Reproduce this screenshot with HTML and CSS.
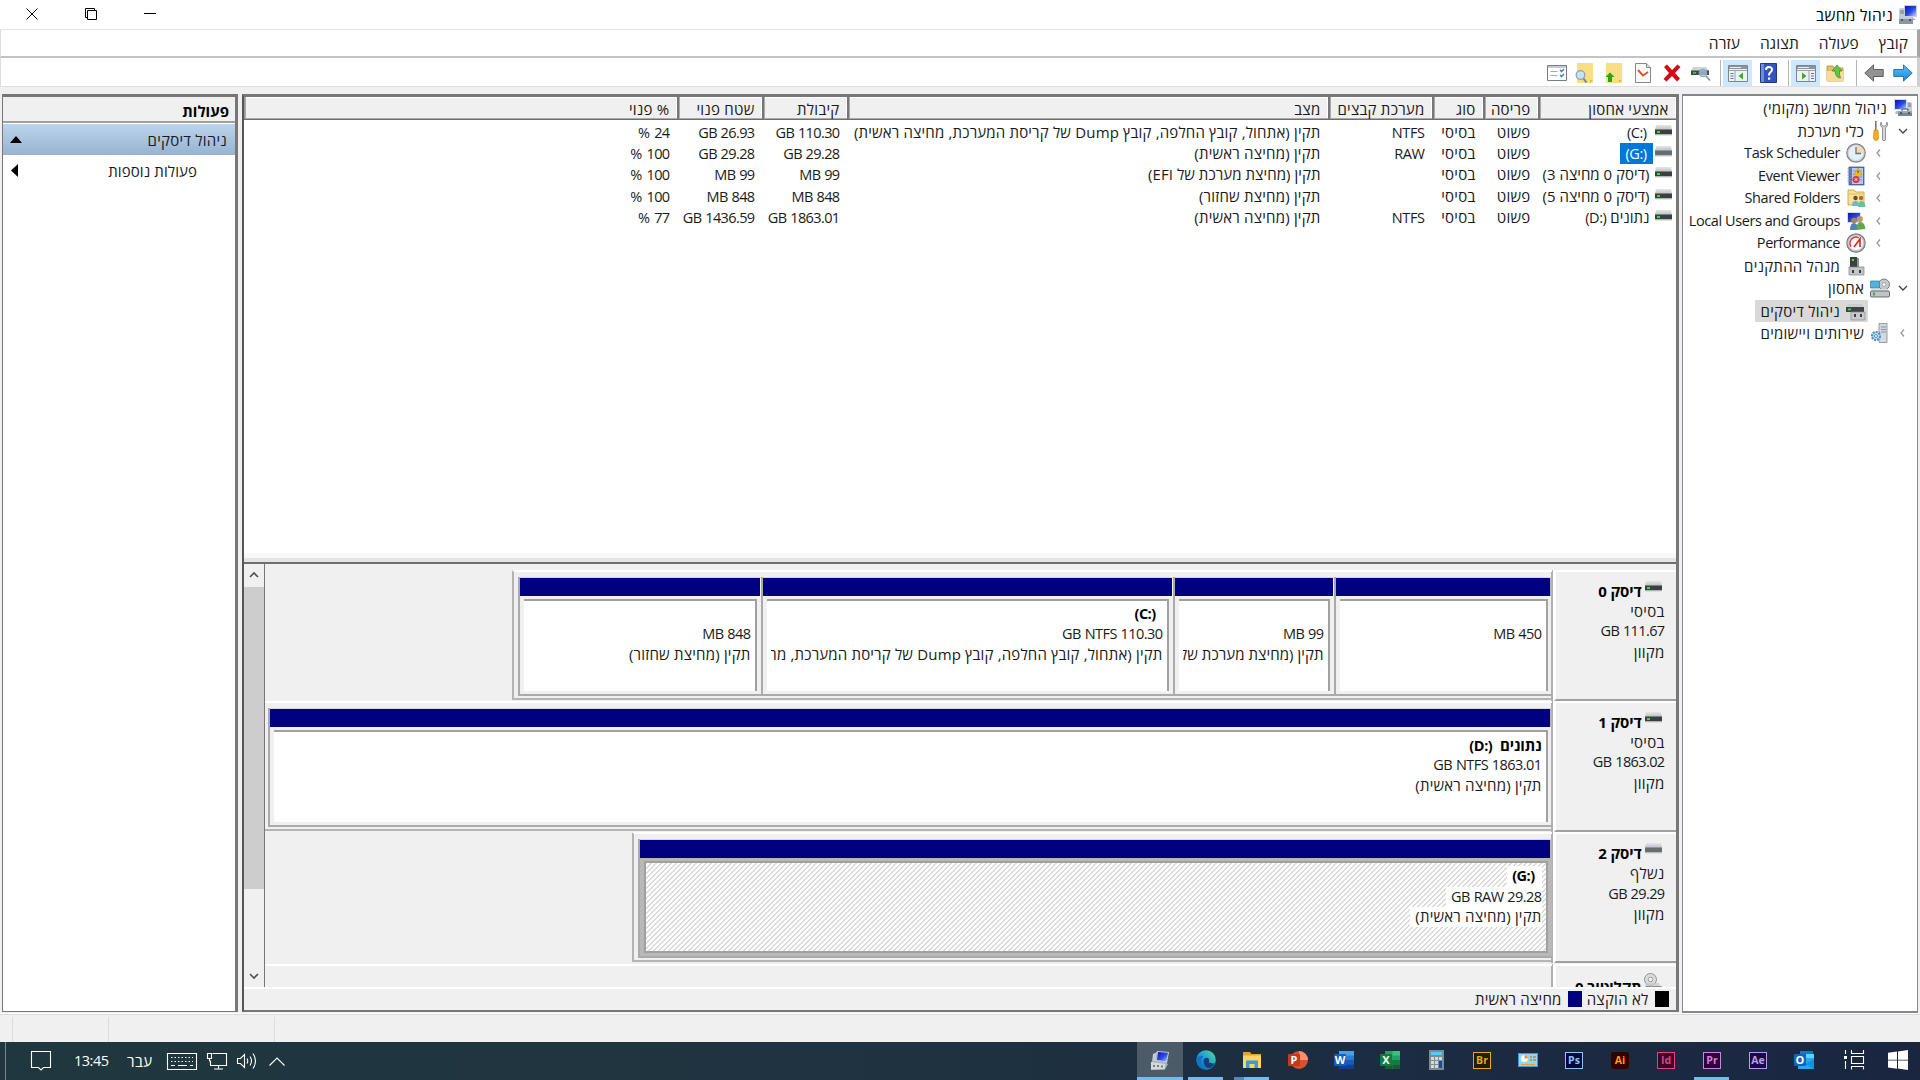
FILE: index.html
```html
<!DOCTYPE html>
<html lang="he" dir="rtl">
<head>
<meta charset="utf-8">
<title>ניהול מחשב</title>
<link rel="stylesheet" href="styles.css">
</head>
<body>
<svg class="defs" aria-hidden="true">
  <defs>
    <linearGradient id="gSilver" x1="0" y1="0" x2="0" y2="1"><stop offset="0" stop-color="#e4e7ea"/><stop offset="1" stop-color="#b9bec3"/></linearGradient>
    <linearGradient id="gScreen" x1="0" y1="0" x2="1" y2="1"><stop offset="0" stop-color="#0a12b8"/><stop offset=".55" stop-color="#2d4be0"/><stop offset="1" stop-color="#b8d4ff"/></linearGradient>
    <linearGradient id="gBlue" x1="0" y1="0" x2="0" y2="1"><stop offset="0" stop-color="#5cc0f8"/><stop offset="1" stop-color="#1b86d8"/></linearGradient>
    <linearGradient id="gEdge" x1="0" y1="1" x2="1" y2="0"><stop offset="0" stop-color="#0c59a4"/><stop offset=".5" stop-color="#1b9de2"/><stop offset="1" stop-color="#5fe07a"/></linearGradient>
    <symbol id="disk" viewBox="0 0 17 11"><path d="M1 0h15l1 5H0z" fill="url(#gSilver)"/><rect y="4.500" width="17" height="5" fill="#3c3f42"/><rect x="2" y="6" width="3" height="2" fill="#2fe03a"/><rect y="9.500" width="17" height="1" fill="#c9ccd0"/></symbol>
    <symbol id="disk-off" viewBox="0 0 17 11"><path d="M1 0h15l1 5H0z" fill="url(#gSilver)"/><rect y="4.500" width="17" height="5" fill="#6a6d70"/><rect y="9.500" width="17" height="1" fill="#c9ccd0"/></symbol>
    <symbol id="computer" viewBox="0 0 20 20"><path d="M1 1h13v11H1z" fill="#d8dde4"/><path d="M2 2h11v9H2z" fill="url(#gScreen)"/><path d="M14 4h3l2 1v8h-5z" fill="#c3cad0"/><path d="M15 6h3M15 8h3" stroke="#6f7a85"/><path d="M3 13h5l1 3H2z" fill="#b3bac0"/><path d="M5 13h14v5H5z" fill="#76858f"/><path d="M5 13h14v2H5z" fill="#9aa8b1"/><path d="M8 14v2M16 14v2" stroke="#39444c" stroke-width="1.5"/><path d="M9 13v-2h6v2" fill="none" stroke="#4a565f"/></symbol>
    <symbol id="computer-flip" viewBox="0 0 20 20"><path d="M6 0h13v12H6z" fill="#c9cfee"/><path d="M7 1h11v10H7z" fill="url(#gScreen)"/><path d="M2 3h5v9H1V5z" fill="#c3cad0"/><path d="M2 6h4M2 8h4" stroke="#6f7a85"/><path d="M1 12h14v7H1z" fill="#8b979f"/><path d="M1 12h14v2H1z" fill="#c4cbd0"/><path d="M4 14v2M12 14v2" stroke="#39444c" stroke-width="1.5"/><path d="M14 12l4 3h-3z" fill="#aab"/></symbol>
    <symbol id="console" viewBox="0 0 20 20"><path d="M7 1l12 1-2 11-11-2z" fill="#c9cfee"/><path d="M8 2l10 .8-1.700 8.700L7 10z" fill="url(#gScreen)"/><path d="M3 4l4-2-1 9-4 1z" fill="#c3cad0"/><path d="M1 12l9-2 8 4-3 5-14 1z" fill="#aeb6bc"/><path d="M1 12l14 2v5.500L1 19.500z" fill="#d3d8dc"/><path d="M4 15v2M8 15v2M12 15.500v2" stroke="#56616a" stroke-width="1.500"/></symbol>
    <symbol id="tools" viewBox="0 0 20 20"><path d="M5 0h1.6v10H5z" fill="#777"/><path d="M4 9h4l.6 8q-.4 2.6-2.6 2.6T3.400 17z" fill="#f2ad1f" stroke="#c98508" stroke-width=".6"/><path d="M11 1q-2 4 1.500 6v12q1.500 1.500 3 0V7q3.500-2 1.500-6l-1 3.500-2 .8-2-.8z" fill="#d5d8da" stroke="#7c8286" stroke-width=".8"/></symbol>
    <symbol id="clock" viewBox="0 0 20 20"><circle cx="10" cy="10" r="9.200" fill="#d3d6d9" stroke="#808487" stroke-width="1.200"/><circle cx="10" cy="10" r="7.200" fill="#e4f0fa"/><path d="M10 10V2.800A7.200 7.200 0 0 1 17.200 10z" fill="#fbd9a4"/><path d="M10 4v6.500h5" fill="none" stroke="#57769a" stroke-width="1.300"/></symbol>
    <symbol id="events" viewBox="0 0 20 20"><rect x="3" y="1" width="15" height="18" fill="#5673b4" stroke="#3a5289" stroke-width=".7"/><rect x="6" y="2" width="11" height="16" fill="#b9c9ea"/><path d="M7 5h9M7 8h9M7 11h9M7 14h9" stroke="#7d97cf"/><path d="M1.500 3h4M1.500 6h4M1.500 9h4M1.500 12h4M1.500 15h4" stroke="#8594ad" stroke-width="1.200"/><path d="M12 2l4 7H8z" fill="#f6c719" stroke="#b98d00" stroke-width=".5"/><path d="M12 4.500v2.700" stroke="#333"/><circle cx="10" cy="13.500" r="3.500" fill="#dc3737"/><path d="M8.700 12.200l2.600 2.600m0-2.600l-2.600 2.600" stroke="#fff"/></symbol>
    <symbol id="shared" viewBox="0 0 20 20"><path d="M2 2h6l2 2h8v13H2z" fill="#f9e09a" stroke="#c69c2d" stroke-width=".8"/><path d="M3 6h14" stroke="#e2bd58"/><circle cx="9.500" cy="10" r="2.200" fill="#6b4b2e"/><path d="M6 18q0-5 3.500-5t3.500 5z" fill="#6fb4dc"/><circle cx="15" cy="10" r="2.200" fill="#a2713e"/><path d="M12 19q0-6 3.500-6t4 6z" fill="#5fc793"/></symbol>
    <symbol id="users" viewBox="0 0 20 20"><path d="M1 1h14v11H1z" fill="#d8dde4"/><path d="M2 2h12v9H2z" fill="url(#gScreen)"/><circle cx="8" cy="9.500" r="2.800" fill="#a88262"/><path d="M4 19q0-7 4-7t4 7z" fill="#5483b7"/><circle cx="14" cy="8" r="2.900" fill="#c59a62"/><path d="M10.500 19q0-8 4-8t5 7z" fill="#63a750"/></symbol>
    <symbol id="gauge" viewBox="0 0 20 20"><circle cx="10" cy="10" r="9.200" fill="#c5c8cb" stroke="#7a7e81" stroke-width="1.200"/><circle cx="10" cy="10" r="7" fill="#fff"/><path d="M5 13.500A6 6 0 0 1 13 5" fill="none" stroke="#d33" stroke-width="1.400"/><path d="M8 14l6-8v8" fill="none" stroke="#e02020" stroke-width="1.600"/></symbol>
    <symbol id="device" viewBox="0 0 20 20"><path d="M4 1h7v12H4z" fill="#3d4144"/><path d="M11 2h2v9h-2z" fill="#8d9296"/><rect x="6" y="3" width="2" height="2" fill="#3bdb45"/><path d="M3 11h15v8H3z" fill="#c3c7ca" stroke="#7e8386" stroke-width=".7"/><path d="M6 14h2v3H6zM13 14h2v3h-2z" fill="#3a3d40"/></symbol>
    <symbol id="storage" viewBox="0 0 20 20"><circle cx="14" cy="6.500" r="5.500" fill="#c4c8cb" stroke="#7a8084"/><circle cx="14" cy="6.500" r="1.800" fill="#fff" stroke="#888" stroke-width=".6"/><path d="M.5 3h9v7h-9z" fill="#52b4dc" stroke="#277fa8" stroke-width=".7"/><path d="M2 11h16l1.500 3H.5z" fill="#dde0e3"/><rect x=".5" y="13" width="19" height="6" rx="1" fill="#c0c4c8" stroke="#5d6266" stroke-width=".9"/><path d="M3 16h2" stroke="#32b53c" stroke-width="3"/></symbol>
    <symbol id="diskmgmt" viewBox="0 0 20 20"><path d="M2 3h14l2 4H0z" fill="#c9cdd1"/><rect y="6" width="18" height="5" fill="#3f4346"/><rect x="2" y="7.500" width="3" height="1.800" fill="#38db42"/><path d="M5 11h14v8H5z" fill="#c6cacd" stroke="#888d91" stroke-width=".7"/><path d="M8 13h2v3H8zM14 13h2v3h-2z" fill="#3d4043"/></symbol>
    <symbol id="services" viewBox="0 0 20 20"><path d="M9 .500h8v19H9z" fill="#d3d9de" stroke="#7f8a94" stroke-width=".8"/><path d="M11 4h5M11 6.500h5M11 9h5" stroke="#8995a0"/><circle cx="6" cy="13" r="4" fill="#c7e0f3" stroke="#4e8fbf" stroke-width="2.200" stroke-dasharray="2 1"/><circle cx="6" cy="13" r="1.500" fill="#fff" stroke="#4e8fbf"/></symbol>
    <symbol id="disc" viewBox="0 0 18 18"><circle cx="6.500" cy="6.500" r="6" fill="#d9dcdf" stroke="#8f9498"/><circle cx="6.500" cy="6.500" r="2.300" fill="#f3f4f5" stroke="#9a9fa3"/><path d="M2 10h13l2 4H1z" fill="#c5c9cc" opacity=".8"/><rect x="2" y="13.500" width="16" height="4.500" fill="#4a4e51"/><rect x="4" y="14.500" width="3" height="2" fill="#2fe03a"/></symbol>
    <symbol id="fwd" viewBox="0 0 20 18"><path d="M.8 5.500h9.700V.9L19.200 9l-8.700 8.100v-4.600H.8z" fill="url(#gBlue)" stroke="#2877b4" stroke-width="1"/></symbol>
    <symbol id="back" viewBox="0 0 20 18"><path d="M19.200 5.500H9.500V.9L.8 9l8.700 8.100v-4.600h9.700z" fill="#929292" stroke="#5f5f5f" stroke-width="1"/></symbol>
    <symbol id="folder-up" viewBox="0 0 18 18"><path d="M1 2h6l1.500 2H17v13H1z" fill="#e5bd62" stroke="#b78e38" stroke-width=".8"/><path d="M1 7h16v10H1z" fill="#f6dc98"/><path d="M14.500 14q-5 0-5.500-7H6l5-6 5 6h-2.500q-.5 4 1 7z" fill="#5fc542" stroke="#2c8f1d" stroke-width=".7"/></symbol>
    <symbol id="pane-r" viewBox="0 0 20 17"><path d="M.5.500h19v16H.5z" fill="#eef0f2" stroke="#7c868f"/><path d="M1 1h18v3H1z" fill="#8a949e"/><path d="M2 2.500h11" stroke="#e9edf0"/><path d="M1 5.500h18M13 6v10" stroke="#98a2aa"/><path d="M15 8.500h3M15 11h3M15 13.500h3" stroke="#56779e" stroke-width="1.200"/><path d="M6 7.500v7l4.500-3.500z" fill="#3cab2a"/></symbol>
    <symbol id="pane-l" viewBox="0 0 20 17"><path d="M.5.500h19v16H.5z" fill="#eef0f2" stroke="#7c868f"/><path d="M1 1h18v3H1z" fill="#8a949e"/><path d="M2 2.500h11" stroke="#e9edf0"/><path d="M1 5.500h18M7 6v10" stroke="#98a2aa"/><path d="M2.500 8.500h3M2.500 11h3M2.500 13.500h3" stroke="#56779e" stroke-width="1.200"/><path d="M15 7.500v7L10.500 11z" fill="#3cab2a"/></symbol>
    <symbol id="help" viewBox="0 0 17 20"><path d="M.5.500h16v19H.5z" fill="#3155bd" stroke="#203987"/><path d="M1 1h3v18H1z" fill="#6f8cdc"/><path d="M6 7q0-3 3-3t3 2.700q0 1.500-1.500 2.500T9 12.500" fill="none" stroke="#fff" stroke-width="2"/><rect x="8" y="14.500" width="2.200" height="2.200" fill="#fff"/></symbol>
    <symbol id="disk-find" viewBox="0 0 20 18"><path d="M2 3h13l3 4H0z" fill="#cfd3d7"/><rect y="6.500" width="18" height="4.500" fill="#45494c"/><rect x="2" y="8" width="3" height="1.600" fill="#36d441"/><circle cx="12" cy="9" r="3.800" fill="#9cc6e4" fill-opacity=".8" stroke="#8fa3b3" stroke-width="1.100"/><path d="M15 12l4 4.500" stroke="#8296a6" stroke-width="1.800"/></symbol>
    <symbol id="del" viewBox="0 0 18 18"><path d="M1 3l3-2.500L9 6l5.500-5.500L17.500 3 12 9l5 5.500-3 3L9 12l-5.500 5.500-3-2.500L6 9z" fill="#d40a14"/></symbol>
    <symbol id="doc" viewBox="0 0 16 20"><path d="M.5.500h11l4 4v15H.5z" fill="#fafafa" stroke="#888"/><path d="M11.500.500v4h4" fill="#ddd" stroke="#888"/><path d="M3 7l5 5.500L13 9" fill="none" stroke="#e4502b" stroke-width="1.900"/></symbol>
    <symbol id="note-up" viewBox="0 0 17 20"><path d="M1 0h16v20H1z" fill="#f8df84"/><path d="M14 20V17h3" fill="#e0bb4c"/><path d="M5 9.500L.5 14H3v5h4v-5h2.500z" fill="#29a41d"/></symbol>
    <symbol id="note-find" viewBox="0 0 18 20"><path d="M2 0h16v20H2z" fill="#f8df84"/><path d="M15 20V17h3" fill="#e0bb4c"/><circle cx="5.500" cy="12" r="4.300" fill="#c6e2f4" stroke="#8aa4b6" stroke-width="1.300"/><path d="M8.500 15.500l3 4" stroke="#71889a" stroke-width="2"/></symbol>
    <symbol id="list" viewBox="0 0 20 16"><path d="M.5.500h19v15H.5z" fill="#fff" stroke="#747e86"/><path d="M1 1h18v2H1z" fill="#c5ccd1"/><path d="M3.500 6.500h7M3.500 10.500h7" stroke="#a2aab1"/><path d="M13 5l1.500 1.500L17 4M13 10l1.500 1.500L17 9" fill="none" stroke="#2e7fc4" stroke-width="1.400"/></symbol>
    <symbol id="edge" viewBox="0 0 20 20"><circle cx="10" cy="10" r="9.800" fill="url(#gEdge)"/><path d="M.3 9Q3 5 7.500 6 4.500 9 5.500 13q1.500 4.500 6.500 6.500Q1.500 20.500.3 9z" fill="#1373c4"/><path d="M7.500 11q.5-3.500 3.500-3.200 2.500.5 2 3.200-.8 1.500-.8 2.300 3 1.800 6.800-.3-1 3.500-4.500 5Q8 19 7.500 11z" fill="#123f78"/><path d="M9 9.500q2.500-1.500 3.800 1-.8 1.800-.8 2.800 3.500 1.500 7-.8-1.500 1-4.500.6-2.500-.5-1.800-2.200Q12.500 7.500 9 9.500z" fill="#1b2a41"/></symbol>
    <symbol id="explorer" viewBox="0 0 20 18"><path d="M1 1h7l1.500 2H19v14H1z" fill="#e0a526"/><path d="M1 4.500h18V17H1z" fill="#fcd565"/><path d="M4 17V9.500h12V17h-3.500v-4h-5v4z" fill="#3f98dc"/></symbol>
    <symbol id="ppt" viewBox="0 0 20 20"><circle cx="11" cy="10" r="9" fill="#d35230"/><path d="M11 1a9 9 0 0 1 9 9h-9z" fill="#ff8f6b"/><rect y="4" width="12" height="12" rx="1" fill="#c13b1b"/></symbol>
    <symbol id="word" viewBox="0 0 20 18"><path d="M5 0h15v18H5z" fill="#2b7cd3"/><path d="M5 0h15v4.500H5z" fill="#41a5ee"/><path d="M5 9h15v4.500H5z" fill="#185abd"/><path d="M5 13.500h15V18H5z" fill="#103f91"/><rect y="3" width="12" height="12" rx="1" fill="#185abd"/></symbol>
    <symbol id="excel" viewBox="0 0 20 18"><path d="M5 0h15v18H5z" fill="#21a366"/><path d="M12.500 0H20v4.500h-7.500z" fill="#33c481"/><path d="M5 9h7.500v9H5z" fill="#185c37"/><path d="M12.500 9H20v4.500h-7.500z" fill="#107c41"/><path d="M12.500 13.500H20V18h-7.500z" fill="#185c37"/><rect y="3" width="12" height="12" rx="1" fill="#107c41"/></symbol>
    <symbol id="outlook" viewBox="0 0 20 18"><path d="M6 0h13v10H6z" fill="#0f78d4"/><path d="M12 3h8v6h-8z" fill="#50d9ff"/><path d="M4 7h16v11H4z" fill="#28a8ea"/><path d="M20 8v10l-9-5z" fill="#1490df"/><rect y="3" width="12" height="12" rx="1" fill="#0f66b8"/></symbol>
    <symbol id="calc" viewBox="0 0 15 20"><path d="M0 0h15v20H0z" fill="#7f8b94"/><path d="M2 2h11v3H2z" fill="#4ed0f5"/><path d="M2 7h3v3H2zM6 7h3v3H6zM10 7h3v3h-3zM2 11h3v3H2zM6 11h3v3H6zM2 15h3v3H2zM6 15h3v3H6z" fill="#d3d9dd"/><path d="M10 11h3v7h-3z" fill="#12509c"/></symbol>
    <symbol id="panel" viewBox="0 0 20 14"><path d="M0 0h20v14H0z" fill="#3d9cd2"/><path d="M1 1h18v12H1z" fill="#8ed6fa"/><circle cx="6.500" cy="5.500" r="3.500" fill="#fff"/><path d="M6.500 5.500V2A3.500 3.500 0 0 1 10 5.500z" fill="#f39a1e"/><path d="M12 4h2M15 4h3M12 7h2M15 7h3" stroke="#e07c14" stroke-width="1.300"/><path d="M3 11.500h14" stroke="#f39a1e"/></symbol>
    <symbol id="taskview" viewBox="0 0 21 20"><g fill="none" stroke="#fff" stroke-width="1.100"><path d="M1.500 0v4M1.500 11v8M7.500 0v3.500h12V0M7.500 6.500h12v7h-12zM7.500 19.500v-3h12v3"/></g><path d="M0 6h3v3H0z" fill="#fff"/></symbol>
    <symbol id="win" viewBox="0 0 20 20"><path d="M0 2.800L9 1.500v8.200H0zM10 1.400L20 0v9.700H10zM0 10.600h9v8.200l-9-1.300zM10 10.600h10V20l-10-1.400z" fill="#fff"/></symbol>
  </defs>
</svg>

<header class="titlebar">
  <div class="title"><svg class="ic20"><use href="#computer-flip"/></svg><span>ניהול מחשב</span></div>
  <div class="winbtns" dir="ltr">
    <svg width="12" height="12"><path d="M.5.500l11 11m0-11l-11 11" stroke="#000" fill="none"/></svg>
    <svg width="12" height="12"><path d="M2.500 2.500h9v9h-9zM2.500 9.500h-2v-9h9v2" stroke="#000" fill="none"/></svg>
    <svg width="12" height="12"><path d="M0 5.500h12" stroke="#000"/></svg>
  </div>
</header>

<nav class="menubar"><span>קובץ</span><span>פעולה</span><span>תצוגה</span><span>עזרה</span></nav>

<div class="toolbar">
  <svg class="t-arrow"><use href="#fwd"/></svg>
  <svg class="t-arrow t-back"><use href="#back"/></svg>
  <i class="sep"></i>
  <svg class="t-folder"><use href="#folder-up"/></svg>
  <span class="toggled"><svg><use href="#pane-r"/></svg></span>
  <i class="sep sep-near"></i>
  <svg class="t-help"><use href="#help"/></svg>
  <span class="toggled toggled-b"><svg><use href="#pane-l"/></svg></span>
  <i class="sep sep-near"></i>
  <svg class="t-find"><use href="#disk-find"/></svg>
  <svg class="t-del"><use href="#del"/></svg>
  <svg class="t-doc"><use href="#doc"/></svg>
  <svg class="t-up"><use href="#note-up"/></svg>
  <svg class="t-nfind"><use href="#note-find"/></svg>
  <svg class="t-list"><use href="#list"/></svg>
</div>

<main class="work">
  <aside class="tree">
    <div class="node root"><svg class="ic20"><use href="#computer"/></svg><span>ניהול מחשב (מקומי)</span></div>
    <div class="node l1"><svg class="chev"><path d="M1 3l4 4 4-4" stroke="#444"/></svg><svg class="ic20"><use href="#tools"/></svg><span>כלי מערכת</span></div>
    <div class="node l2"><svg class="chev"><path d="M6 1.500L3 5l3 3.500" stroke="#999"/></svg><svg class="ic20"><use href="#clock"/></svg><span class="en">Task Scheduler</span></div>
    <div class="node l2"><svg class="chev"><path d="M6 1.500L3 5l3 3.500" stroke="#999"/></svg><svg class="ic20"><use href="#events"/></svg><span class="en">Event Viewer</span></div>
    <div class="node l2"><svg class="chev"><path d="M6 1.500L3 5l3 3.500" stroke="#999"/></svg><svg class="ic20"><use href="#shared"/></svg><span class="en">Shared Folders</span></div>
    <div class="node l2"><svg class="chev"><path d="M6 1.500L3 5l3 3.500" stroke="#999"/></svg><svg class="ic20"><use href="#users"/></svg><span class="en">Local Users and Groups</span></div>
    <div class="node l2"><svg class="chev"><path d="M6 1.500L3 5l3 3.500" stroke="#999"/></svg><svg class="ic20"><use href="#gauge"/></svg><span class="en">Performance</span></div>
    <div class="node l2"><i class="chev"></i><svg class="ic20"><use href="#device"/></svg><span>מנהל ההתקנים</span></div>
    <div class="node l1"><svg class="chev"><path d="M1 3l4 4 4-4" stroke="#444"/></svg><svg class="ic20"><use href="#storage"/></svg><span>אחסון</span></div>
    <div class="node l2"><i class="chev"></i><div class="sel"><svg class="ic20"><use href="#diskmgmt"/></svg><span>ניהול דיסקים</span></div></div>
    <div class="node l1"><svg class="chev"><path d="M6 1.500L3 5l3 3.500" stroke="#999"/></svg><svg class="ic20"><use href="#services"/></svg><span>שירותים ויישומים</span></div>
  </aside>

  <section class="center">
    <div class="vol-head cols">
      <span>אמצעי אחסון</span><span>פריסה</span><span>סוג</span><span>מערכת קבצים</span><span>מצב</span><span>קיבולת</span><span>שטח פנוי</span><span>% פנוי</span>
    </div>
    <div class="vol-body">
      <div class="vol cols"><span class="name"><svg><use href="#disk"/></svg><b class="sp" dir="ltr">(C:)</b></span><span>פשוט</span><span>בסיסי</span><span class="en">NTFS</span><span class="long">תקין (אתחול, קובץ החלפה, קובץ Dump של קריסת המערכת, מחיצה ראשית)</span><span class="num" dir="ltr">GB 110.30</span><span class="num" dir="ltr">GB 26.93</span><span class="num pct" dir="ltr">% 24</span></div>
      <div class="vol cols"><span class="name"><svg><use href="#disk-off"/></svg><b class="sp hl" dir="ltr">(G:)</b></span><span>פשוט</span><span>בסיסי</span><span class="en">RAW</span><span class="st">תקין (מחיצה ראשית)</span><span class="num" dir="ltr">GB 29.28</span><span class="num" dir="ltr">GB 29.28</span><span class="num pct" dir="ltr">% 100</span></div>
      <div class="vol cols"><span class="name"><svg><use href="#disk"/></svg><b>(דיסק 0 מחיצה 3)</b></span><span>פשוט</span><span>בסיסי</span><span></span><span class="efi">תקין (מחיצת מערכת של EFI)</span><span class="num" dir="ltr">MB 99</span><span class="num" dir="ltr">MB 99</span><span class="num pct" dir="ltr">% 100</span></div>
      <div class="vol cols"><span class="name"><svg><use href="#disk"/></svg><b>(דיסק 0 מחיצה 5)</b></span><span>פשוט</span><span>בסיסי</span><span></span><span class="st">תקין (מחיצת שחזור)</span><span class="num" dir="ltr">MB 848</span><span class="num" dir="ltr">MB 848</span><span class="num pct" dir="ltr">% 100</span></div>
      <div class="vol cols"><span class="name"><svg><use href="#disk"/></svg><b>נתונים <bdi class="en" dir="ltr">(D:)</bdi></b></span><span>פשוט</span><span>בסיסי</span><span class="en">NTFS</span><span class="st">תקין (מחיצה ראשית)</span><span class="num" dir="ltr">GB 1863.01</span><span class="num" dir="ltr">GB 1436.59</span><span class="num pct" dir="ltr">% 77</span></div>
    </div>
    <div class="splitter"></div>
    <div class="graph">
      <div class="disks">
        <div class="disk">
          <div class="label"><h4><svg><use href="#disk"/></svg>דיסק 0</h4><p>בסיסי</p><p dir="ltr">GB 111.67</p><p>מקוון</p></div>
          <div class="parts d0">
            <div class="part p450"><div class="bar"></div><div class="pane"><p></p><p dir="ltr">MB 450</p></div></div>
            <div class="part p99"><div class="bar"></div><div class="pane"><p></p><p dir="ltr">MB 99</p><p class="efi">תקין (מחיצת מערכת של EFI)</p></div></div>
            <div class="part pc"><div class="bar"></div><div class="pane"><p class="nm in" dir="ltr">(C:)</p><p dir="ltr">GB NTFS 110.30</p><p class="long">תקין (אתחול, קובץ החלפה, קובץ Dump של קריסת המערכת, מחיצה ראשית)</p></div></div>
            <div class="part p848"><div class="bar"></div><div class="pane"><p></p><p dir="ltr">MB 848</p><p class="st">תקין (מחיצת שחזור)</p></div></div>
          </div>
        </div>
        <div class="disk">
          <div class="label"><h4><svg><use href="#disk"/></svg>דיסק 1</h4><p>בסיסי</p><p dir="ltr">GB 1863.02</p><p>מקוון</p></div>
          <div class="parts d1">
            <div class="part"><div class="bar"></div><div class="pane"><p class="nm">נתונים&nbsp; <bdi class="en" dir="ltr">(D:)</bdi></p><p dir="ltr">GB NTFS 1863.01</p><p class="st">תקין (מחיצה ראשית)</p></div></div>
          </div>
        </div>
        <div class="disk">
          <div class="label"><h4><svg><use href="#disk-off"/></svg>דיסק 2</h4><p>נשלף</p><p dir="ltr">GB 29.29</p><p>מקוון</p></div>
          <div class="parts d2">
            <div class="part picked"><div class="bar"></div><div class="pane"><p class="nm in" dir="ltr">(G:)</p><p dir="ltr">GB RAW 29.28</p><p class="st">תקין (מחיצה ראשית)</p></div></div>
          </div>
        </div>
        <div class="disk">
          <div class="label"><h4 class="cd"><svg><use href="#disc"/></svg>תקליטור 0</h4></div>
          <div class="parts d3"></div>
        </div>
      </div>
      <div class="scroll">
        <svg viewBox="0 0 10 10"><path d="M1 7l4-4 4 4"/></svg>
        <div class="thumb"></div>
        <svg viewBox="0 0 10 10"><path d="M1 3l4 4 4-4"/></svg>
      </div>
    </div>
    <div class="legend"><i class="sw black"></i><span>לא הוקצה</span><i class="sw navy"></i><span>מחיצה ראשית</span></div>
  </section>

  <aside class="actions">
    <h3>פעולות</h3>
    <div class="group"><span>ניהול דיסקים</span><svg width="12" height="7"><path d="M0 7l6-7 6 7z"/></svg></div>
    <div class="more"><span>פעולות נוספות</span><svg width="7" height="13"><path d="M7 0v13L0 6.500z"/></svg></div>
  </aside>
</main>

<div class="status"><i></i><i></i><i></i></div>

<footer class="taskbar">
  <div class="apps">
    <span class="app"><svg class="w20"><use href="#win"/></svg></span>
    <span class="app tv"><svg class="w21"><use href="#taskview"/></svg></span>
    <span class="app"><svg class="w18"><use href="#outlook"/></svg><b class="ol">O</b></span>
    <span class="app"><em class="adobe ae">Ae</em></span>
    <span class="app run"><em class="adobe pr">Pr</em></span>
    <span class="app"><em class="adobe idn">Id</em></span>
    <span class="app"><em class="adobe ai">Ai</em></span>
    <span class="app"><em class="adobe ps">Ps</em></span>
    <span class="app"><svg class="w14"><use href="#panel"/></svg></span>
    <span class="app"><em class="adobe br">Br</em></span>
    <span class="app"><svg class="wc"><use href="#calc"/></svg></span>
    <span class="app"><svg class="w18"><use href="#excel"/></svg><b>X</b></span>
    <span class="app"><svg class="w18"><use href="#word"/></svg><b>W</b></span>
    <span class="app"><svg class="w20"><use href="#ppt"/></svg><b>P</b></span>
    <span class="app run multi"><svg class="w18"><use href="#explorer"/></svg></span>
    <span class="app run"><svg class="w20"><use href="#edge"/></svg></span>
    <span class="app run on"><svg class="w20"><use href="#console"/></svg></span>
  </div>
  <div class="tray" dir="ltr">
    <i class="peek"></i>
    <svg class="tr-note" width="20" height="20"><path d="M.5.500h19v16h-7l-2.500 2.500L7.500 16.500h-7z"/></svg>
    <span class="time">13:45</span>
    <span class="lang">עבר</span>
    <svg class="tr-kb" width="30" height="17"><path d="M.5.500h29v16H.5z"/><path d="M4 4.500h22M4 8.500h22" stroke-dasharray="1.500 2"/><path d="M4 12.500h4M11 12.500h9M23 12.500h3"/></svg>
    <svg class="tr-net" width="20" height="17"><path d="M5.500.500h14v12h-16V7.500M11.500 12.500v3M7 16h9M.5.500h4v5h-4zM2.500 5.500v3"/></svg>
    <svg class="tr-vol" width="20" height="18"><path d="M.5 6.500h3l4-4v13l-4-4h-3zM10 6.500q1.500 2.500 0 5M13 4.500q3 4.500 0 9M16 1.500q5 7.500 0 15"/></svg>
    <svg class="tr-up" width="16" height="9"><path d="M.5 8.500L8 1l7.500 7.500"/></svg>
  </div>
</footer>
</body>
</html>
```

FILE: styles.css
```css
* { box-sizing: border-box; }
html, body { margin: 0; height: 100%; }
body {
  width: 1920px; height: 1080px; overflow: hidden;
  display: flex; flex-direction: column;
  background: #f0f0f0; color: #1a1a1a;
  font-family: "Open Sans", "Noto Sans", sans-serif; font-size: 15px; line-height: 20px; letter-spacing: .24px;
  white-space: nowrap;
}
h3, h4, p { margin: 0; font: inherit; }
b, em { font-weight: inherit; font-style: normal; }
svg { display: block; flex: none; overflow: visible; }
.defs { position: absolute; width: 0; height: 0; }
.ic20 { width: 20px; height: 20px; }
.en { font-size: 14.5px; letter-spacing: -.42px; }

.titlebar { height: 29px; flex: none; background: #fff; display: flex; justify-content: space-between; align-items: center; font-size: 15.5px; letter-spacing: .3px; }
.title { display: flex; align-items: center; gap: 5px; padding-right: 2px; color: #000; }
.winbtns { display: flex; gap: 47px; padding: 0 0 1px 26px; }

.menubar { height: 29px; flex: none; background: #fff; border-top: 1px solid #e3e3e3; border-bottom: 2px solid #c4c4c8; border-left: 1px solid #ddd; border-right: 3px solid #a5a5a5; display: flex; align-items: center; padding: 0 9px 0 0; gap: 20px; font-size: 15.5px; letter-spacing: .1px; }

.toolbar { height: 29px; flex: none; background: #fff; border-bottom: 1px solid #dedede; border-left: 1px solid #ddd; border-right: 3px solid #d0d0d0; display: flex; align-items: center; padding: 2px 4px 0 0; }
.t-arrow { width: 20px; height: 18px; }
.t-back { margin-right: 9px; }
.sep { width: 1px; height: 26px; background: #b4b4b4; margin-right: 7px; }
.sep-near { margin-right: 2px; }
.t-folder { width: 18px; height: 18px; margin-right: 12px; }
.toggled { width: 29px; height: 26px; background: #cce8ff; display: flex; align-items: center; justify-content: center; margin-right: 6px; }
.toggled svg { width: 20px; height: 17px; }
.toggled-b { margin-right: 8px; }
.t-help { width: 17px; height: 20px; margin-right: 11px; }
.t-find { width: 20px; height: 18px; margin-right: 9px; }
.t-del { width: 18px; height: 18px; margin-right: 10px; }
.t-doc { width: 16px; height: 20px; margin-right: 12px; }
.t-up { width: 17px; height: 20px; margin-right: 13px; }
.t-nfind { width: 18px; height: 20px; margin-right: 12px; }
.t-list { width: 20px; height: 16px; margin-right: 8px; }

.work { height: 927px; flex: none; padding: 7px 2px 0; display: flex; justify-content: space-between; border-bottom: 1px solid #fff; }

.tree { width: 236px; height: 919px; background: #fff; border: 1px solid #828790; border-width: 2px 1px; padding-top: 1px; }
.node { height: 22.5px; display: flex; align-items: center; }
.node .chev { width: 10px; height: 10px; fill: none; stroke-width: 1.3; margin-left: 8px; }
.node span { margin-right: 6px; }
.root { padding-right: 4px; }
.l1 { padding-right: 9px; }
.l2 { padding-right: 33px; }
.sel { display: flex; align-items: center; height: 22px; background: #d9d9d9; margin-right: -2px; padding: 0 2px 0 6px; }

.center { width: 1437px; height: 918px; border: 2px solid #777; border-width: 3px 3px 2px 2px; border-left-color: #555; display: flex; flex-direction: column; background: #f0f0f0; }
.cols { display: grid; grid-template-columns: 138px 55px 51px 104px 481px 85px 85px 1fr; }
.vol-head { height: 23px; flex: none; background: #f0f0f0; border-bottom: 2px solid #6e6e6e; }
.vol-head span { padding: 2px 7px 0 0; line-height: 20px; border-left: 2px solid #777; box-shadow: inset 1px -1px #aaa, inset -1px 1px #fff; }
.vol-head span:last-child { border-left: 1px solid #999; }
.vol-body { height: 433px; flex: none; background: #fff; padding-top: 2px; }
.vol { height: 21.2px; line-height: 21px; }
.vol > span { padding-right: 7px; text-align: right; }
.vol > .name { padding-right: 4px; display: flex; letter-spacing: 0; }
.vol > .long, .long { letter-spacing: .17px; }
.st { letter-spacing: .2px; }
.efi { letter-spacing: .06px; }
.name svg { width: 17px; height: 11px; margin: 3px 0 0 2px; }
.name b { padding: 0 3px; height: 21px; }
.name .sp { padding: 0 6px 0 6px; font-size: 14.5px; letter-spacing: -.5px; }
.name .hl { background: #0078d7; color: #fff; }
.num, p[dir="ltr"] { font-size: 14.5px; letter-spacing: -.62px; word-spacing: .6px; }
.pct { word-spacing: 1.6px; }

.splitter { height: 11px; flex: none; border-top: 5px solid #f8f8f8; border-bottom: 2px solid #6e6e6e; background: #e4e4e4; }

.graph { height: 423px; flex: none; display: flex; overflow: hidden; }
.disks { flex: 1; padding-top: 6px; border-left: 1px solid #777; min-width: 0; }
.disk { height: 131.2px; display: flex; }
.label { width: 122px; height: 131px; border-bottom: 2px solid #a0a0a0; border-top: 2px solid #fff; border-left: 2px solid #fff; box-shadow: -1px 0 #fff, -3px 0 #b0b0b0; padding: 9px 9px 0 0; }
.label p { height: 20.3px; text-align: right; padding-right: 2px; }
.label h4 { height: 20px; font-weight: 700; color: #000; display: flex; padding-right: 5px; letter-spacing: -.1px; }
.label h4 svg { width: 17px; height: 11px; margin: 0 0 0 3px; }
.label h4.cd { padding-top: 2px; }
.label h4.cd svg { width: 18px; height: 18px; margin: -4px 0 0 2px; }
.parts { margin-right: 2px; height: 130px; display: flex; border-bottom: 2px solid #b4b4b4; border-left: 2px solid #b3b3b3; border-top: 2px solid #fff; padding: 5px 0 3px 4px; }
.d0 { width: 1040px; }
.d1 { flex: 1; border-left: 0; padding-left: 3px; }
.d2 { width: 920px; }
.d3 { flex: 1; border-left: 0; }
.part { border-left: 2px solid #aaa; border-bottom: 2px solid #aaa; display: flex; flex-direction: column; height: 119px; min-width: 0; }
.part:only-child { flex: 1; }
.bar { height: 19px; flex: none; background: #000080; border: solid #f4f4f4; border-width: 0 1px 0 0; border-top: 1px solid #d5d5e5; }
.part:first-child .bar { border-right-color: #b5b5c0; border-right-width: 2px; }
.pane { flex: 1; margin: 3px 4px; background: #fff; border-top: 2px solid #a0a0a0; border-right: 2px solid #a0a0a0; overflow: hidden; padding: 3px 4px 0; }
.pane p { height: 20.3px; line-height: 19px; text-align: right; overflow: hidden; }
.pane .nm { font-weight: 700; color: #000; letter-spacing: -.1px; line-height: 20px; }
.pane p[dir="ltr"] { line-height: 20px; letter-spacing: -.56px; }
.pane .in { padding-right: 7px; }
.p450 { width: 218px; }
.p99 { width: 161px; }
.pc { width: 412px; }
.p848 { flex: 1; }
.picked { background: #b8b8b8; }
.picked .pane { display: flex; flex-direction: column; align-items: flex-start; border: 2px solid #a0a0a0; background: #fff linear-gradient(135deg, #dadada 12.5%, #fff 12.5%, #fff 50%, #dadada 50%, #dadada 62.5%, #fff 62.5%) 0 0 / 5px 5px; }
.picked .pane p { background: #fff; padding-left: 5px; }

.scroll { width: 20px; background: #f0f0f0; display: flex; flex-direction: column; }
.scroll svg { width: 10px; height: 10px; margin: 6px auto; fill: none; stroke: #505050; stroke-width: 1.6; }
.thumb { height: 302px; background: #cdcdcd; margin: 1px 0 auto; }

.legend { flex: 1; border-top: 2px solid #fff; display: flex; align-items: center; padding: 0 7px 1px 0; }
.sw { width: 14px; height: 16px; }
.black { background: #000; }
.navy { background: #000080; margin-right: 5px; }
.legend span { margin-right: 6px; }

.actions { width: 236px; height: 918px; background: #fff; border: solid #777; border-width: 3px 3px 1px 1px; }
.actions h3 { height: 26px; line-height: 28px; font-weight: 700; color: #000; background: #f0f0f0; border-bottom: 2px solid #a0a0a0; padding-right: 6px; letter-spacing: 0; }
.group { height: 31px; margin-top: 1px; background: linear-gradient(#bcd4ec, #97b3d1); display: flex; justify-content: space-between; align-items: center; padding: 0 8px 0 7px; }
.more { height: 31px; display: flex; justify-content: space-between; align-items: center; padding: 0 38px 0 8px; letter-spacing: .1px; }

.status { height: 28px; flex: none; border-top: 1px solid #dcdcdc; display: flex; padding-right: 1645px; }
.status i { width: 1px; margin-top: 2px; background: #dcdcdc; }
.status i + i { margin-right: 165px; }
.status i:last-child { margin-right: 95px; }

.taskbar { height: 38px; flex: none; background: linear-gradient(90deg, #20373f, #1f3440 40%, #1b2a41 80%, #1a2640); display: flex; justify-content: space-between; color: #fff; letter-spacing: 0; }
.apps { display: flex; }
.app { width: 46px; display: flex; justify-content: center; align-items: center; position: relative; padding-bottom: 2px; }
.app:first-child { width: 45px; }
.app.tv { width: 48px; padding-left: 7px; }
.app.run::after { content: ""; position: absolute; bottom: 0; left: 5px; right: 6px; height: 3px; background: #76b9ed; }
.app.on { background: #4b5c68; }
.app.on::after, .app.run.on::after { left: 0; right: 0; }
.app.multi::before { content: ""; position: absolute; bottom: 0; left: 5px; width: 10px; height: 3px; background: #5289b5; z-index: 1; }
.app b { position: absolute; left: 13px; top: 10px; width: 12px; text-align: center; font-size: 11px; font-weight: 700; line-height: 16px; direction: ltr; }
.w20 { width: 20px; height: 20px; }
.w21 { width: 21px; height: 20px; }
.w18 { width: 20px; height: 18px; }
.w14 { width: 20px; height: 14px; }
.wc { width: 15px; height: 20px; }
.adobe { width: 18px; height: 17px; border: 1px solid; font-size: 10.5px; line-height: 15px; text-align: center; font-weight: 700; direction: ltr; }
.ae { color: #b79af5; background: #1b0a3f; }
.pr { color: #d57bf3; background: #2a0634; }
.idn { color: #e0408c; background: #3a0720; }
.ai { color: #ff9a00; background: #330000; border-color: #330000; border-radius: 3px; }
.ps { color: #8fc3f5; background: #05053f; }
.br { color: #e2ad0c; background: #261a00; }
.tray { display: flex; align-items: center; color: #fff; }
.tray svg { fill: none; stroke: #fff; stroke-width: 1.1; }
.peek { width: 1px; height: 38px; background: #7a878c; margin-left: 5px; }
.tr-note { margin-left: 25px; }
.time { margin-left: 23px; width: 36px; font-size: 14.5px; letter-spacing: -.5px; }
.lang { margin-left: 17px; width: 27px; letter-spacing: .4px; }
.tr-kb { margin-left: 13px; }
.tr-net { margin-left: 10px; }
.tr-vol { margin-left: 10px; }
.tr-up { margin-left: 12px; }
```
